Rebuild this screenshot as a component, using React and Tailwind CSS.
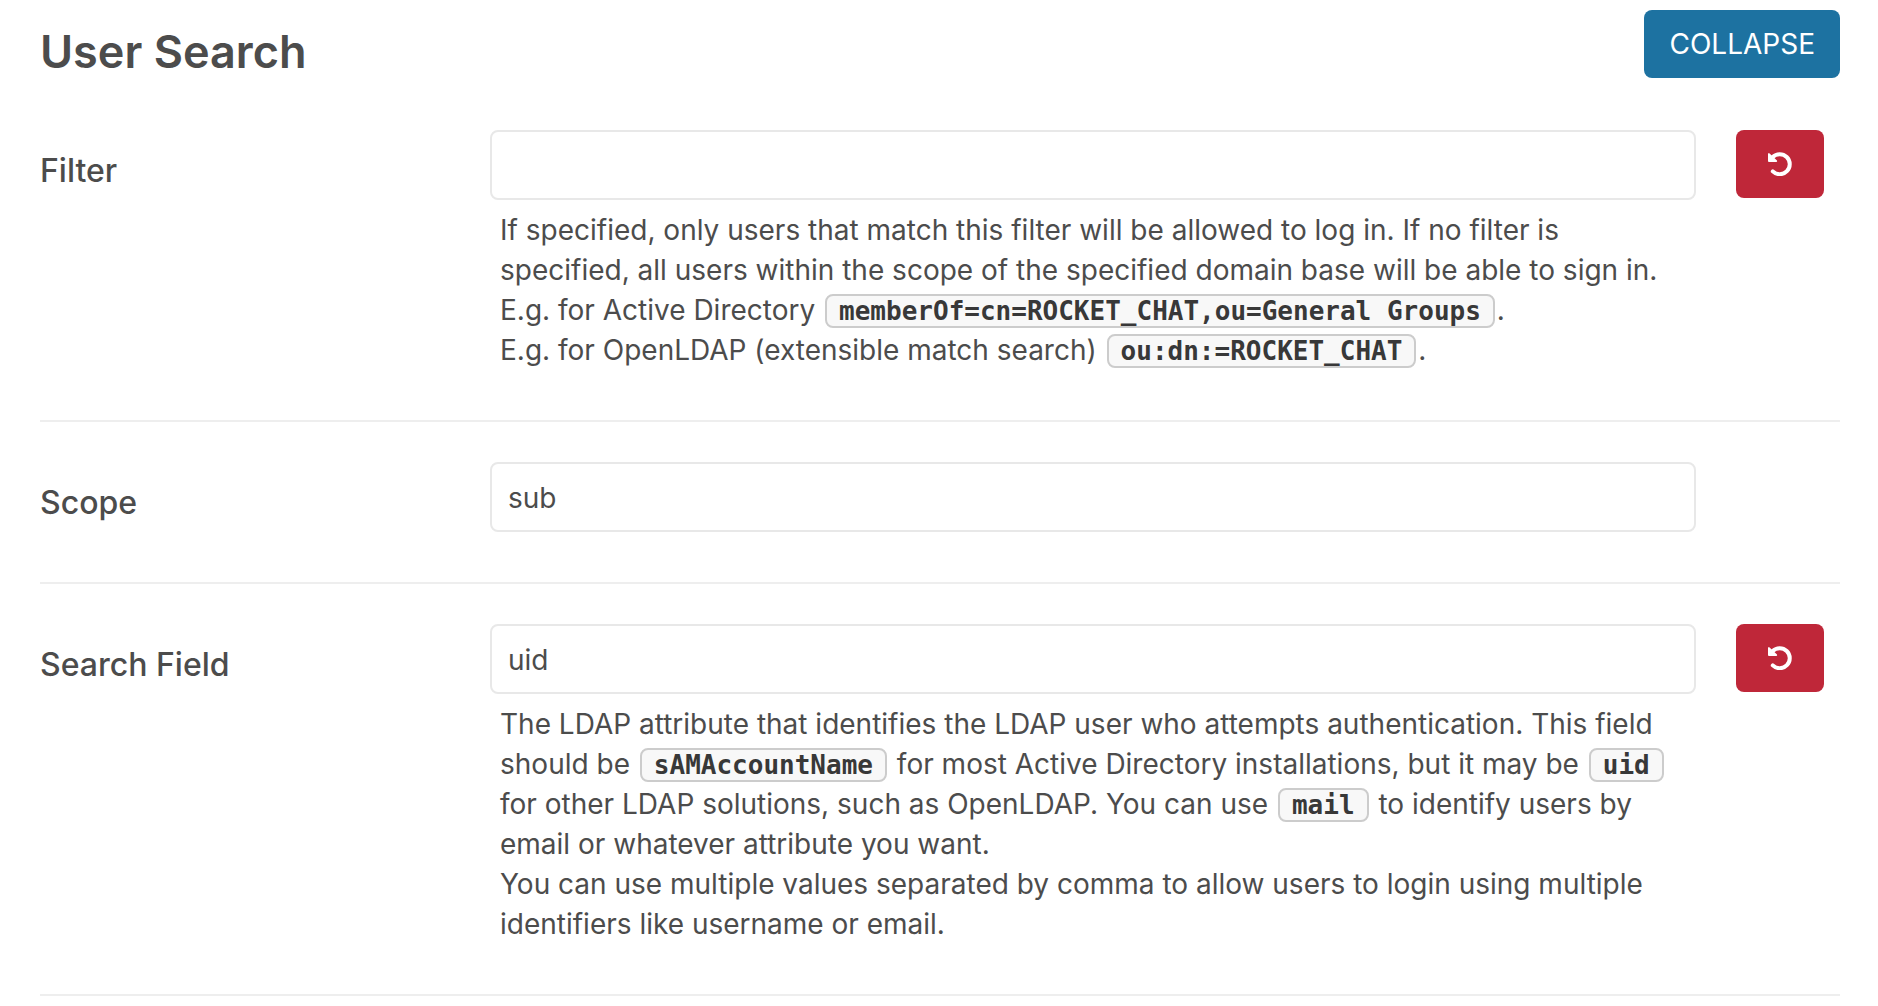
import React from "react";

function Code({ children }) {
  return (
    <code className="mx-[2px] inline-block rounded-lg border-2 border-[#cccccc] bg-[#f8f8f8] px-3 align-baseline font-['DejaVu_Sans_Mono',monospace] text-[26px] leading-[30px] font-bold text-[#383838]">
      {children}
    </code>
  );
}

function UndoIcon() {
  return (
    <svg viewBox="0 0 24 24" className="size-6" fill="none" aria-hidden="true">
      <path d="M4.8 19.4A10 10 0 1 0 4.6 5.2" stroke="currentColor" strokeWidth="4" strokeLinecap="round" />
      <path d="M0.2 1.4Q0.8 0.6 1.6 1.4L9 8.6Q9.6 9.8 8.4 10H1Q0 10 0 9V2Q0 1.6 0.2 1.4Z" fill="currentColor" />
    </svg>
  );
}

function Setting({ id, label, value, reset, children }) {
  return (
    <div className="grid grid-cols-[25%_1fr_144px] border-b-2 border-[#eeeeee] pb-[50px]">
      <label htmlFor={id} className="pt-[21px] text-[32px] leading-10 font-medium">
        {label}
      </label>
      <div className="min-w-0">
        <input
          id={id}
          type="text"
          defaultValue={value}
          className="block h-[70px] w-full rounded-lg border-2 border-[#e8e8e8] bg-white px-4 pt-[2px] text-[28px] outline-none"
        />
        {children && <div className="mt-[10px] px-[10px] text-[28px] leading-10">{children}</div>}
      </div>
      {reset && (
        <button
          type="button"
          aria-label={"Reset " + label}
          className="ml-10 flex h-[68px] w-[88px] items-center justify-center rounded-lg bg-[#bf2739] text-white"
        >
          <UndoIcon />
        </button>
      )}
    </div>
  );
}

export default function App() {
  return (
    <section className="bg-white pt-[10px] pr-[38px] pl-10 font-[Inter,sans-serif] text-[#4c4c4c]">
      <header className="flex items-start justify-between">
        <h2 className="pt-3 text-[45px] leading-[60px] font-semibold">User Search</h2>
        <button type="button" className="h-[68px] rounded-lg bg-[#1d72a1] px-[25px] text-[28px] text-white">
          COLLAPSE
        </button>
      </header>
      <div className="mt-12 flex flex-col gap-10">
        <Setting id="filter" label="Filter" value="" reset>
          If specified, only users that match this filter will be allowed to log in. If no filter is specified, all
          users within the scope of the specified domain base will be able to sign in.
          <br />
          E.g. for Active Directory <Code>memberOf=cn=ROCKET_CHAT,ou=General Groups</Code>.
          <br />
          E.g. for OpenLDAP (extensible match search) <Code>ou:dn:=ROCKET_CHAT</Code>.
        </Setting>
        <Setting id="scope" label="Scope" value="sub" />
        <Setting id="search-field" label="Search Field" value="uid" reset>
          The LDAP attribute that identifies the LDAP user who attempts authentication. This field should be{" "}
          <Code>sAMAccountName</Code> for most Active Directory installations, but it may be <Code>uid</Code> for other
          LDAP solutions, such as OpenLDAP. You can use <Code>mail</Code> to identify users by email or whatever
          attribute you want.
          <br />
          You can use multiple values separated by comma to allow users to login using multiple identifiers like
          username or email.
        </Setting>
      </div>
    </section>
  );
}
